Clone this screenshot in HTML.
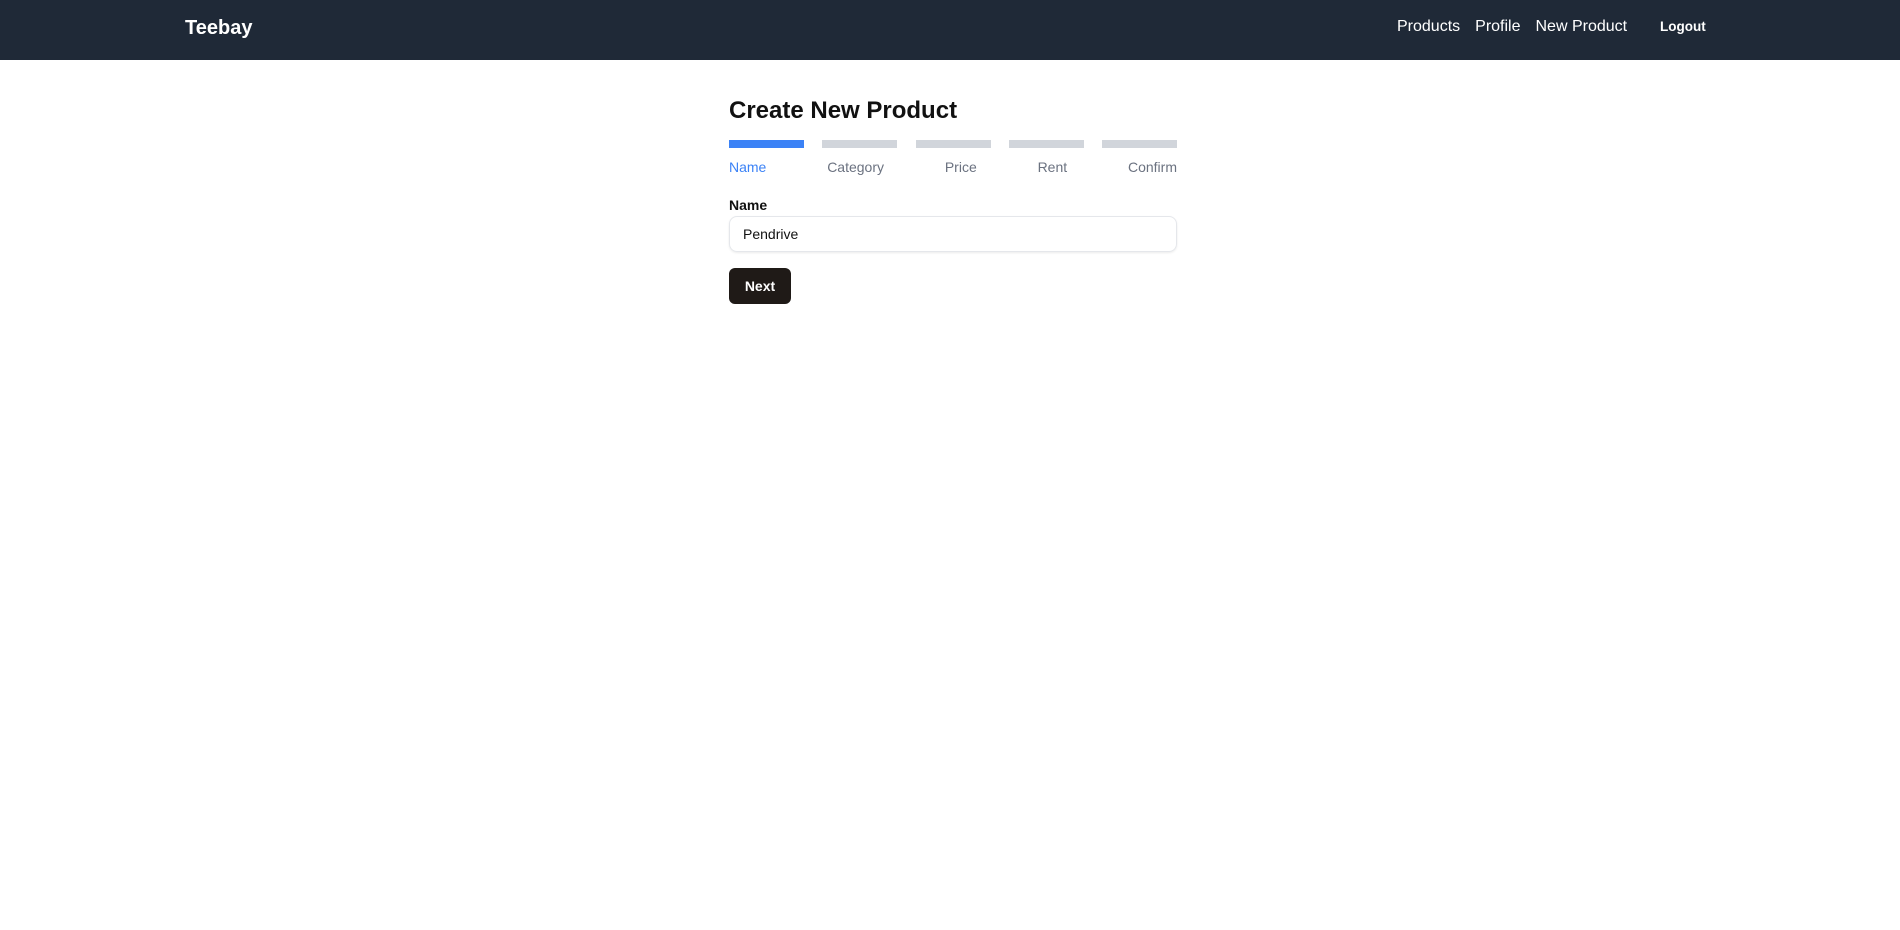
<!DOCTYPE html>
<html><head><style>
*{box-sizing:border-box;margin:0;padding:0}
body{width:1900px;height:930px;background:#fff;font-family:"Liberation Sans",sans-serif;position:relative;overflow:hidden}
nav{height:60px;background:#1f2937;position:relative;color:#fff}
.logo{position:absolute;left:185px;top:17px;font-size:20px;font-weight:bold}
.links{position:absolute;left:1397px;top:18px;font-size:16px;display:flex;gap:15px}
.logout{position:absolute;left:1660px;top:19px;font-size:13.5px;font-weight:bold}
.main{position:absolute;left:729px;top:97px;width:448px}
h1{font-size:24px;font-weight:bold;color:#111}
.bars{display:flex;justify-content:space-between;margin-top:15px}
.bars div{width:75px;height:8px;background:#d1d5db}
.bars div:first-child{background:#3b82f6}
.labels{display:flex;justify-content:space-between;margin-top:11px;font-size:14px;color:#6b7280}
.labels span:first-child{color:#3b82f6}
label{display:block;margin-top:22px;font-size:14px;font-weight:bold;color:#111}
.input{margin-top:3px;height:36px;border:1px solid #e5e7eb;border-radius:8px;box-shadow:0 1px 2px rgba(0,0,0,.08);padding:9px 13px;font-size:14px;color:#111}
.btn{margin-top:16px;width:62px;height:36px;background:#1f1a17;border-radius:6px;color:#fff;font-size:14px;font-weight:bold;display:flex;align-items:center;justify-content:center}
</style></head><body>
<nav><div class="logo">Teebay</div><div class="links"><span>Products</span><span>Profile</span><span>New Product</span></div><div class="logout">Logout</div></nav>
<div class="main">
<h1>Create New Product</h1>
<div class="bars"><div></div><div></div><div></div><div></div><div></div></div>
<div class="labels"><span>Name</span><span>Category</span><span>Price</span><span>Rent</span><span>Confirm</span></div>
<label>Name</label>
<div class="input">Pendrive</div>
<div class="btn">Next</div>
</div>
</body></html>
